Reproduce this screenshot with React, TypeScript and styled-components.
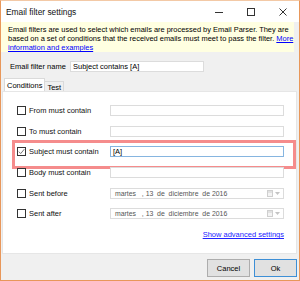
import React from "react";
import styled, { createGlobalStyle, css } from "styled-components";

const Global = createGlobalStyle`
  html, body { margin: 0; padding: 0; background: #ffffff; }
  * { box-sizing: border-box; }
`;

const Window = styled.div`
  width: 300px;
  height: 281px;
  border: 1px solid #e8975a;
  border-top-color: #f3c9a6;
  background: #f0f0f0;
  display: flex;
  flex-direction: column;
  font-family: "Liberation Sans", Arial, sans-serif;
  color: #000;
  overflow: hidden;
`;

const TitleBar = styled.div`
  height: 21px;
  flex: none;
  background: #ffffff;
  display: flex;
  align-items: center;
  padding-left: 5px;
  font-size: 8.4px;
`;

const Title = styled.div`
  flex: 1;
  color: #111;
`;

const Controls = styled.div`
  display: flex;
  height: 100%;
`;

const CtrlBtn = styled.div`
  width: 32px;
  display: flex;
  align-items: center;
  justify-content: center;
  color: #333;
`;

const Info = styled.div`
  flex: none;
  background: #ffffe1;
  margin-right: 5px;
  padding: 3px 7px 0 7px;
  height: 30px;
  font-size: 7.45px;
  line-height: 9.2px;
  white-space: nowrap;
  color: #000;
`;

const InfoLink = styled.a`
  color: #0000ff;
  text-decoration: underline;
`;

const NameRow = styled.div`
  display: flex;
  align-items: center;
  margin-top: 8px;
  padding-left: 9px;
  height: 12px;
  font-size: 7.5px;
`;

const NameLabel = styled.div`
  width: 60px;
`;

const TextBox = styled.div<{ $w: number; $focus?: boolean }>`
  width: ${(p) => p.$w}px;
  height: 11px;
  background: #fff;
  border: 1px solid ${(p) => (p.$focus ? "#86b5e0" : "#dcdcdc")};
  font-size: 7.5px;
  line-height: 9px;
  padding-left: 2px;
  display: flex;
  align-items: center;
`;

const TabRow = styled.div`
  display: flex;
  align-items: flex-end;
  height: 13px;
  margin-top: 6px;
  padding-left: 3px;
`;

const Tab = styled.div<{ $active?: boolean }>`
  font-size: 7.5px;
  padding: 0 2px;
  display: flex;
  align-items: center;
  ${(p) =>
    p.$active
      ? css`
          height: 13px;
          background: #fff;
          border: 1px solid #dadada;
          border-bottom: none;
        `
      : css`
          height: 10px;
          background: #f0f0f0;
          border: 1px solid #dadada;
          border-left: none;
          border-bottom: none;
          padding-top: 2px;
        `}
`;

const Panel = styled.div`
  flex: none;
  height: 163px;
  margin: 0 2px 0 1px;
  background: #fff;
  border: 1px solid #e6e6e6;
  padding: 8px 0 0 14px;
  display: flex;
  flex-direction: column;
`;

const Row = styled.div<{ $hl?: boolean }>`
  position: relative;
  height: 20.7px;
  display: flex;
  align-items: center;
  font-size: 7.5px;
  ${(p) =>
    p.$hl &&
    css`
      &::after {
        content: "";
        position: absolute;
        left: -5px;
        top: -1px;
        width: 278px;
        height: 23px;
        border: 3px solid #f58c8c;
        pointer-events: none;
      }
    `}
`;

const Check = styled.div`
  width: 9px;
  height: 9px;
  border: 1px solid #333;
  background: #fff;
  flex: none;
  display: flex;
  align-items: center;
  justify-content: center;
`;

const RowLabel = styled.div`
  width: 84px;
  padding-left: 3px;
  color: #111;
`;

const DateBox = styled.div`
  width: 174px;
  height: 11px;
  border: 1px solid #dcdcdc;
  background: #fff;
  display: flex;
  align-items: center;
  padding-left: 4px;
  font-size: 6.9px;
  color: #555;
  white-space: pre;
`;

const DateText = styled.div`
  flex: 1;
`;

const DateIcons = styled.div`
  display: flex;
  align-items: center;
  gap: 2px;
  padding-right: 3px;
`;

const AdvRow = styled.div`
  display: flex;
  justify-content: flex-end;
  width: 267px;
  margin-top: 6px;
  font-size: 7.5px;
`;

const AdvLink = styled.a`
  color: #2222ff;
  text-decoration: underline;
`;

const Footer = styled.div`
  flex: 1;
  display: flex;
  justify-content: flex-end;
  align-items: flex-start;
  padding-top: 5px;
  padding-right: 2px;
  gap: 4px;
`;

const Button = styled.div<{ $primary?: boolean }>`
  width: 43px;
  height: 18px;
  background: #e1e1e1;
  border: 1px solid ${(p) => (p.$primary ? "#3d8fd6" : "#adadad")};
  font-size: 7.5px;
  display: flex;
  align-items: center;
  justify-content: center;
  color: #000;
`;

const CheckMark = () => (
  <svg width="7" height="7" viewBox="0 0 7 7">
    <path d="M0.8 3.6 L2.7 5.6 L6.3 1.2" fill="none" stroke="#777" strokeWidth="1" />
  </svg>
);

const CalIcon = () => (
  <svg width="6" height="7" viewBox="0 0 6 7">
    <rect x="0.5" y="0.5" width="5" height="6" fill="#f4f4f4" stroke="#cfcfcf" />
    <line x1="0.5" y1="2" x2="5.5" y2="2" stroke="#cfcfcf" />
  </svg>
);

const DropArrow = () => (
  <svg width="5" height="3" viewBox="0 0 5 3">
    <path d="M0 0 L5 0 L2.5 3 Z" fill="#c4c4c4" />
  </svg>
);

type RowDef = { label: string; kind: "text" | "date"; checked?: boolean; value?: string; hl?: boolean };

const rows: RowDef[] = [
  { label: "From must contain", kind: "text" },
  { label: "To must contain", kind: "text" },
  { label: "Subject must contain", kind: "text", checked: true, value: "[A]", hl: true },
  { label: "Body must contain", kind: "text" },
  { label: "Sent before", kind: "date" },
  { label: "Sent after", kind: "date" },
];

export default function App() {
  return (
    <>
      <Global />
      <Window>
        <TitleBar>
          <Title>Email filter settings</Title>
          <Controls>
            <CtrlBtn>
              <svg width="8" height="8" viewBox="0 0 8 8">
                <line x1="0" y1="4.5" x2="8" y2="4.5" stroke="#333" strokeWidth="1" />
              </svg>
            </CtrlBtn>
            <CtrlBtn>
              <svg width="8" height="8" viewBox="0 0 8 8">
                <rect x="0.5" y="0.5" width="7" height="7" fill="none" stroke="#333" strokeWidth="1" />
              </svg>
            </CtrlBtn>
            <CtrlBtn>
              <svg width="8" height="8" viewBox="0 0 8 8">
                <path d="M0.5 0.5 L7.5 7.5 M7.5 0.5 L0.5 7.5" stroke="#333" strokeWidth="1" />
              </svg>
            </CtrlBtn>
          </Controls>
        </TitleBar>
        <Info>
          Email filters are used to select which emails are processed by Email Parser. They are
          <br />
          based on a set of conditions that the received emails must meet to pass the filter.{" "}
          <InfoLink>More</InfoLink>
          <br />
          <InfoLink>information and examples</InfoLink>
        </Info>
        <NameRow>
          <NameLabel>Email filter name</NameLabel>
          <TextBox $w={134}>Subject contains [A]</TextBox>
        </NameRow>
        <TabRow>
          <Tab $active>Conditions</Tab>
          <Tab>Test</Tab>
        </TabRow>
        <Panel>
          {rows.map((r) => (
            <Row key={r.label} $hl={r.hl}>
              <Check>{r.checked && <CheckMark />}</Check>
              <RowLabel>{r.label}</RowLabel>
              {r.kind === "text" ? (
                <TextBox $w={174} $focus={r.hl}>
                  {r.value}
                </TextBox>
              ) : (
                <DateBox>
                  <DateText>{"martes   , 13  de  diciembre  de 2016"}</DateText>
                  <DateIcons>
                    <CalIcon />
                    <DropArrow />
                  </DateIcons>
                </DateBox>
              )}
            </Row>
          ))}
          <AdvRow>
            <AdvLink>Show advanced settings</AdvLink>
          </AdvRow>
        </Panel>
        <Footer>
          <Button>Cancel</Button>
          <Button $primary>Ok</Button>
        </Footer>
      </Window>
    </>
  );
}
